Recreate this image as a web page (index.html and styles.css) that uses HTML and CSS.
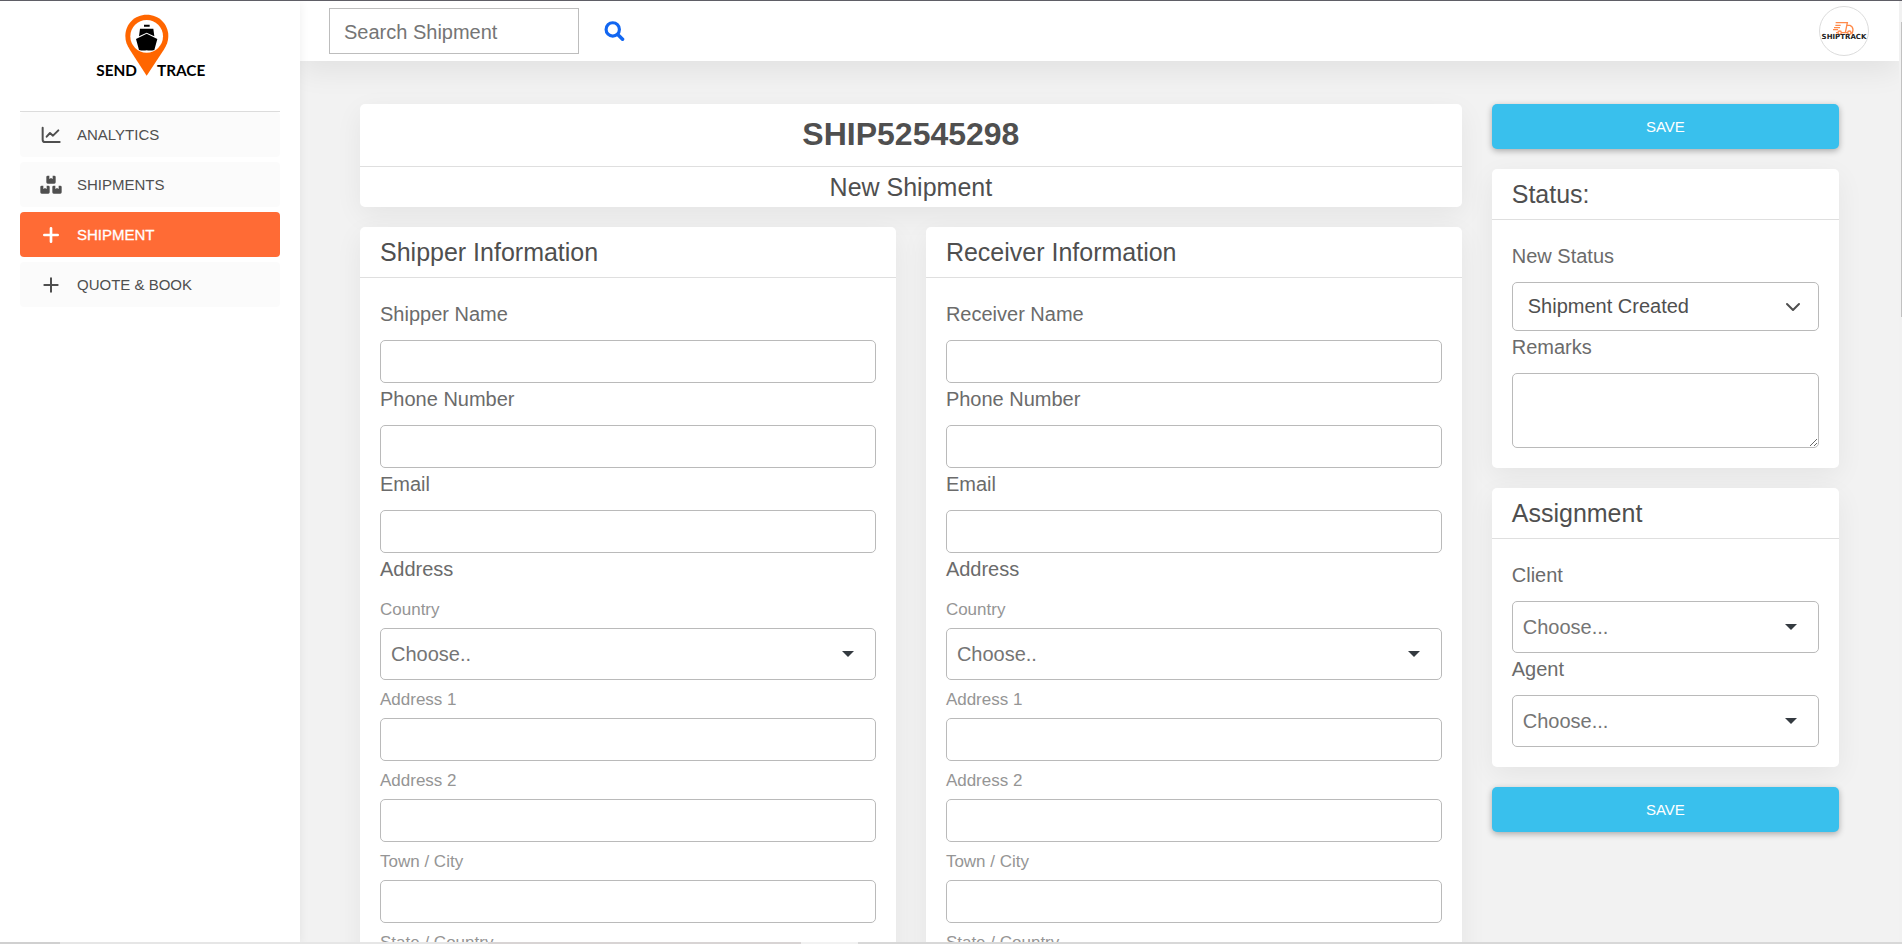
FILE: index.html
```
<!DOCTYPE html>
<html lang="en">
<head>
<meta charset="utf-8">
<title>New Shipment</title>
<link rel="stylesheet" href="styles.css">
</head>
<body>
<div class="app">
  <aside class="sidebar">
    <a class="brand" href="#" aria-label="Send Trace">
      <svg class="brand-logo" viewBox="45 25 330 195">
        <path fill="#ff6600" d="M200 30C164 30 136 58 136 94C136 110 141 122 150 136L200 213L251 136C260 122 265 110 265 94C265 58 237 30 200 30Z"/>
        <circle cx="200" cy="95" r="49" fill="#fff"/>
        <path fill="#000" d="M192 60H209V66H192ZM180 72H220L223 95L200 84L177 95ZM200 87L232 103L223 136Q212 139 200 137Q188 139 177 136L168 103Z"/>
        <text class="brand-text" x="49" y="214">SEND</text>
        <text class="brand-text" x="231" y="214">TRACE</text>
      </svg>
    </a>
    <nav class="menu">
      <a class="menu-item" href="#">
        <svg class="menu-icon" viewBox="0 0 60 60"><path d="M5 8V44Q5 51 12 51H56M17 35L27 24L36 32L52 16" fill="none" stroke="currentColor" stroke-width="6" stroke-linecap="round" stroke-linejoin="round"/></svg>
        Analytics</a>
      <a class="menu-item" href="#">
        <svg class="menu-icon" viewBox="0 0 64 60" fill="currentColor"><path id="box" d="M22 2H27V12L32 9L37 12V2H42Q46 2 46 6V22Q46 26 42 26H22Q18 26 18 22V6Q18 2 22 2Z"/><use href="#box" x="-18" y="30"/><use href="#box" x="18" y="30"/></svg>
        Shipments</a>
      <a class="menu-item active" href="#" aria-current="page">
        <svg class="menu-icon" viewBox="0 0 60 60"><path d="M30 10V50M10 30H50" fill="none" stroke="currentColor" stroke-width="8" stroke-linecap="round"/></svg>
        Shipment</a>
      <a class="menu-item" href="#">
        <svg class="menu-icon" viewBox="0 0 60 60"><path d="M30 10V50M10 30H50" fill="none" stroke="currentColor" stroke-width="6" stroke-linecap="round"/></svg>
        Quote &amp; Book</a>
    </nav>
  </aside>

  <div class="page">
    <header class="topbar">
      <form class="search">
        <input class="search-input" type="text" placeholder="Search Shipment" aria-label="Search Shipment">
        <button class="search-button" type="button" aria-label="Search">
          <svg class="search-icon" viewBox="0 0 60 60"><g fill="none" stroke="currentColor"><circle cx="25" cy="24" r="19" stroke-width="9"/><path d="M40 39L53 52" stroke-width="10" stroke-linecap="round"/></g></svg>
        </button>
      </form>
      <a class="avatar" href="#" aria-label="Account">
        <svg viewBox="60 21 144 144">
          <g fill="none" stroke="#ff8a4a" stroke-width="4"><path d="M107 68H142L136 98H124M106 76H122M102 83H120M99 89H114M108 98H114M142 76H150Q159 80 159 90L157 99H152M136 98H143"/><circle cx="119" cy="98" r="5"/><circle cx="148" cy="98" r="5"/></g>
          <text class="avatar-text" x="132" y="118" text-anchor="middle">SHIPTRACK</text>
        </svg>
      </a>
    </header>

    <main class="content">
      <div class="main-column">
        <section class="card">
          <h1 class="shipment-id">SHIP52545298</h1>
          <p class="shipment-state">New Shipment</p>
        </section>
        <div class="parties">
          <section class="card">
            <h2 class="card-header">Shipper Information</h2>
            <div class="card-body">
              <label class="label" for="s-name">Shipper Name</label>
              <input class="control" id="s-name" type="text">
              <label class="label" for="s-phone">Phone Number</label>
              <input class="control" id="s-phone" type="tel">
              <label class="label" for="s-email">Email</label>
              <input class="control" id="s-email" type="email">
              <p class="label">Address</p>
              <div class="address">
                <label class="sublabel" for="s-country">Country</label>
                <select class="control picker" id="s-country"><option>Choose..</option></select>
                <label class="sublabel" for="s-addr1">Address 1</label>
                <input class="control" id="s-addr1" type="text">
                <label class="sublabel" for="s-addr2">Address 2</label>
                <input class="control" id="s-addr2" type="text">
                <label class="sublabel" for="s-city">Town / City</label>
                <input class="control" id="s-city" type="text">
                <label class="sublabel" for="s-state">State / Country</label>
                <input class="control" id="s-state" type="text">
              </div>
            </div>
          </section>
          <section class="card">
            <h2 class="card-header">Receiver Information</h2>
            <div class="card-body">
              <label class="label" for="r-name">Receiver Name</label>
              <input class="control" id="r-name" type="text">
              <label class="label" for="r-phone">Phone Number</label>
              <input class="control" id="r-phone" type="tel">
              <label class="label" for="r-email">Email</label>
              <input class="control" id="r-email" type="email">
              <p class="label">Address</p>
              <div class="address">
                <label class="sublabel" for="r-country">Country</label>
                <select class="control picker" id="r-country"><option>Choose..</option></select>
                <label class="sublabel" for="r-addr1">Address 1</label>
                <input class="control" id="r-addr1" type="text">
                <label class="sublabel" for="r-addr2">Address 2</label>
                <input class="control" id="r-addr2" type="text">
                <label class="sublabel" for="r-city">Town / City</label>
                <input class="control" id="r-city" type="text">
                <label class="sublabel" for="r-state">State / Country</label>
                <input class="control" id="r-state" type="text">
              </div>
            </div>
          </section>
        </div>
      </div>

      <div class="side-column">
        <button class="save" type="button">Save</button>
        <section class="card">
          <h2 class="card-header">Status:</h2>
          <div class="card-body">
            <label class="label" for="status">New Status</label>
            <select class="control status-select" id="status"><option>Shipment Created</option></select>
            <label class="label" for="remarks">Remarks</label>
            <textarea class="control remarks" id="remarks"></textarea>
          </div>
        </section>
        <section class="card">
          <h2 class="card-header">Assignment</h2>
          <div class="card-body">
            <label class="label" for="client">Client</label>
            <select class="control picker" id="client"><option>Choose...</option></select>
            <label class="label" for="agent">Agent</label>
            <select class="control picker" id="agent"><option>Choose...</option></select>
          </div>
        </section>
        <button class="save" type="button">Save</button>
      </div>
    </main>
  </div>
  <div class="scroll-track"><div class="scroll-thumb"></div></div>
</div>
<div class="bottom-edge"></div>
</body>
</html>
```
FILE: styles.css
```
* {
  box-sizing: border-box;
}

body {
  margin: 0;
  height: 100vh;
  display: flex;
  flex-direction: column;
  overflow: hidden;
  border-top: 1px solid #5f5e66;
  background: #f2f2f2;
  color: #4f4f4f;
  font-family: "Liberation Sans", Arial, sans-serif;
  font-size: 20px;
  line-height: 32px;
}

h1, h2, p {
  margin: 0;
}

a {
  color: inherit;
  text-decoration: none;
}

input, select, textarea, button {
  font: inherit;
  color: inherit;
}

.app {
  display: flex;
  flex: 1;
  min-height: 0;
}

/* Sidebar */
.sidebar {
  width: 300px;
  flex: none;
  position: relative;
  z-index: 2;
  padding: 12px 20px;
  background: #fff;
  box-shadow: 0 2px 10px rgba(0, 0, 0, 0.07);
}

.brand {
  display: flex;
  justify-content: center;
  height: 98px;
}

.brand-logo {
  width: 110px;
  height: 65px;
  overflow: visible;
}

.brand-text {
  font-family: Lato, sans-serif;
  font-weight: 700;
  font-size: 46px;
  fill: #000;
}

.menu {
  display: flex;
  flex-direction: column;
  gap: 5px;
  border-top: 1px solid #dcdcdc;
}

.menu-item {
  display: flex;
  align-items: center;
  gap: 15px;
  height: 45px;
  padding: 1px 20px 0;
  border-radius: 4px;
  background: #fbfbfb;
  font-size: 15px;
  text-transform: uppercase;
}

.menu-item.active {
  background: #ff6b35;
  color: #fff;
  -webkit-text-stroke: 0.300px #fff;
}

.menu-icon {
  width: 22px;
  height: 20px;
}

/* Top bar */
.page {
  flex: 1;
  min-width: 0;
}

.topbar {
  display: flex;
  align-items: center;
  justify-content: space-between;
  height: 60px;
  padding: 0 30px 0 29px;
  background: #fff;
  box-shadow: 0 10px 30px rgba(0, 0, 0, 0.07);
}

.search {
  display: flex;
  align-items: center;
  gap: 25px;
}

.search-input {
  width: 250px;
  height: 46px;
  padding: 2px 14px 0;
  border: 1px solid #bdbdbd;
  background: #fff;
}

.search-input::placeholder {
  color: #757575;
}

.search-button {
  display: flex;
  padding: 0;
  border: 0;
  background: none;
  color: #1266f1;
}

.search-icon {
  width: 21px;
  height: 21px;
}

.avatar {
  display: flex;
  width: 50px;
  height: 50px;
  border: 1px solid #dcdcdc;
  border-radius: 50%;
}

.avatar svg {
  width: 100%;
  height: 100%;
  overflow: visible;
}

.avatar-text {
  font-family: "DejaVu Sans", sans-serif;
  font-weight: 700;
  font-size: 21px;
  fill: #222;
}

/* Content */
.content {
  display: grid;
  grid-template-columns: repeat(12, 1fr);
  gap: 30px;
  padding: 43px 60px;
}

.main-column {
  grid-column: span 9;
  display: flex;
  flex-direction: column;
  gap: 20px;
}

.side-column {
  grid-column: span 3;
  display: flex;
  flex-direction: column;
  gap: 20px;
}

.parties {
  display: grid;
  grid-template-columns: 1fr 1fr;
  gap: 30px;
}

.card {
  border-radius: 5px;
  background: #fff;
  box-shadow: 0 8px 28px rgba(0, 0, 0, 0.06);
}

.shipment-id {
  padding: 14px 20px 16px;
  border-bottom: 1px solid #dfdfdf;
  font-size: 32px;
  text-align: center;
}

.shipment-state {
  padding: 4px 20px;
  font-size: 25px;
  text-align: center;
}

.card-header {
  padding: 9px 20px;
  border-bottom: 1px solid #dfdfdf;
  font-size: 25px;
  font-weight: 400;
}

.card-body {
  padding: 20px;
}

.label {
  display: block;
  padding-bottom: 10px;
  color: #6b6b6b;
}

.sublabel {
  display: block;
  padding: 6px 0 4px;
  color: #959595;
  font-size: 17px;
  line-height: 28px;
}

.address .sublabel:first-child {
  padding-top: 1px;
}

.control {
  display: block;
  width: 100%;
  height: 43px;
  padding: 0 14px;
  border: 1px solid #bababa;
  border-radius: 5px;
  background: #fff;
  appearance: none;
}

.picker {
  height: 52px;
  padding: 0 10px;
  color: #757575;
  background: #fff url("data:image/svg+xml,%3Csvg xmlns='http://www.w3.org/2000/svg' viewBox='0 0 12 6'%3E%3Cpath fill='%23343a40' d='M0 0H12L6 6Z'/%3E%3C/svg%3E") no-repeat right 21px center / 12px 6px;
}

.status-select {
  height: 49px;
  padding: 0 15px 2px;
  background: #fff url("data:image/svg+xml,%3Csvg xmlns='http://www.w3.org/2000/svg' viewBox='0 0 16 16'%3E%3Cpath fill='none' stroke='%234f4f4f' stroke-linecap='round' stroke-linejoin='round' stroke-width='2' d='M2 5l6 6 6-6'/%3E%3C/svg%3E") no-repeat right 17px center / 16px 16px;
}

.remarks {
  height: 75px;
  resize: vertical;
}

.save {
  height: 45px;
  padding: 0;
  border: 0;
  border-radius: 5px;
  background: #39c0ed;
  box-shadow: 0 2px 6px rgba(0, 0, 0, 0.3);
  color: #fff;
  font-size: 15px;
  text-transform: uppercase;
}

/* Window edges */
.scroll-track {
  width: 3px;
  padding: 21px 0 0 2px;
  position: relative;
  background: #f1f1f1;
}

.scroll-thumb {
  height: 295px;
  background: #c1c1c1;
}

.bottom-edge {
  height: 2px;
  flex: none;
  position: relative;
  z-index: 3;
  background: linear-gradient(90deg, #d0d0d0 60px, #e6e6e6 60px 488px, #d8d4d4 488px 801px, #f2f2f2 801px 858px, #d8d8d8 858px);
}
```
